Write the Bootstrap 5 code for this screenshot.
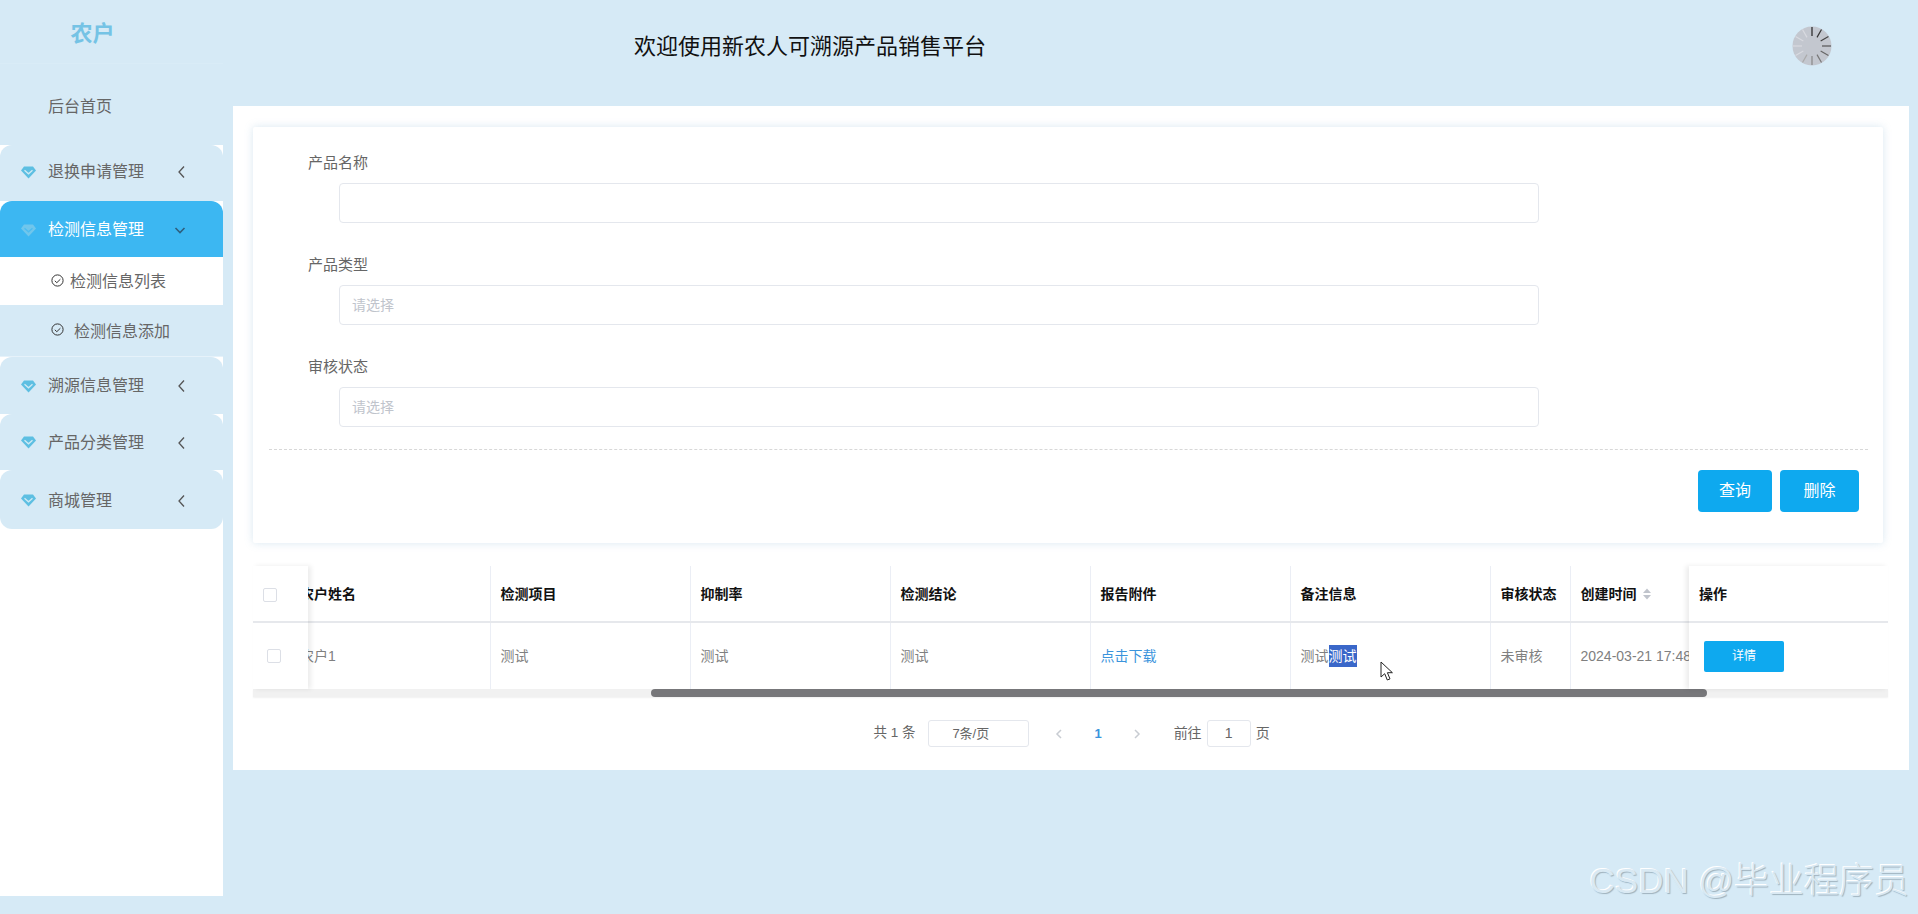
<!DOCTYPE html>
<html lang="zh-CN">
<head>
  <meta charset="UTF-8" />
  <meta name="viewport" content="width=device-width, initial-scale=1" />
  <title>新农人可溯源产品销售平台</title>
  <link href="https://cdn.jsdelivr.net/npm/bootstrap@5.3.0/dist/css/bootstrap.min.css" rel="stylesheet" />
  <style>
    html, body { height: 914px; overflow: hidden; }
    body {
      background-color: #d6eaf6;
      color: #606266;
      font-family: "Liberation Sans", "Noto Sans CJK SC", sans-serif;
      position: relative;
    }
    /* 左侧菜单 */
    .side-box { width: 223px; height: 896px; background: #fff; flex: none; }
    .side-logo {
      height: 64px; background: #d6eaf6; color: #75c3e5;
      font-size: 22px; font-weight: 700; line-height: 68px; text-align: center;
      padding-right: 38px; border-bottom: 1px solid #d9ecf7;
    }
    .side-home { height: 81px; background: #d6eaf6; padding: 31px 0 0 48px; font-size: 16px; line-height: 24px; color: #666; }
    .side-group {
      height: 56.5px; background: #d6eaf6; border-radius: 12px 12px 0 0;
      padding: 2px 37px 0 21px; font-size: 16px; color: #666;
    }
    .side-group .gem { margin-right: 12px; flex: none; }
    .side-group.first-group { height: 56px; padding-bottom: 2px; padding-top: 0; }
    .side-group.active-group { background: #3cb7f2; color: #fff; height: 56px; }
    .side-group.last-group { border-radius: 12px; height: 59px; }
    .side-sub { padding: 2px 0 0 51px; font-size: 16px; color: #666; background: #d6eaf6; }
    .side-sub.cur { background: #fff; height: 48px; }
    .side-sub.other { height: 52px; border-bottom: 1px solid #e6f2fa; }
    .sub-ic { margin-right: 6px; }
    /* 顶部 */
    .main-col { width: 1676px; flex: none; margin-left: 10px; }
    .top-bar { height: 106px; padding-bottom: 14px; }
    .top-title { margin-left: 401px; font-size: 22px; color: #111; }
    .top-spin { margin-right: 77px; }
    /* 主面板 */
    .main-panel { height: 664px; background: #fff; padding: 21px 25px 0 20px; }
    .form-box {
      height: 416px; border: 0; border-radius: 2px; width: 1630px;
      box-shadow: 0 0 8px rgba(120, 170, 205, .28);
      padding: 26px 0 0 55px;
    }
    .fld { margin-bottom: 32px; }
    .fld label { display: block; font-size: 15px; line-height: 20px; margin-bottom: 10px; color: #666; }
    .fld .form-control {
      width: 1200px; height: 40px; margin-left: 31px; font-size: 14px;
      border: 1px solid #e4e7ed; border-radius: 4px; padding: 0 12px; box-shadow: none;
    }
    .fld .form-control::placeholder { color: #c0c4cc; }
    .form-foot {
      margin: -10px 15px 0 -39px; border-top: 1px dashed #d8d8d8;
      padding: 20px 9px 0 0;
    }
    .blue-btn {
      background: #0ea9ef; border: 0; color: #fff; font-size: 16px;
      height: 42px; border-radius: 4px; padding: 0;
    }
    .blue-btn:hover { background: #0ea9ef; color: #fff; }
    .btn-a { width: 74px; }
    .btn-b { width: 79px; }
    /* 表格 */
    .tbl-wrap { width: 1635px; margin-top: 23px; }
    .tbl-row { height: 123px; }
    .pane-l { width: 55px; flex: none; box-shadow: 3px 0 5px rgba(0, 0, 0, .08); z-index: 1; background: #fff; }
    .pane-m { flex: 1; overflow: hidden; }
    .pane-r { width: 199px; flex: none; box-shadow: -3px 0 5px rgba(0, 0, 0, .08); z-index: 1; background: #fff; }
    .pane-m .data-tbl { margin-left: -18px; width: 1410px; }
    .data-tbl { table-layout: fixed; border-collapse: collapse; margin: 0; font-size: 14px; }
    .data-tbl th, .data-tbl td { padding: 0 10px; white-space: nowrap; overflow: hidden; border-right: 1px solid #ebeef5; }
    .data-tbl th { height: 56px; color: #111; font-weight: 700; border-bottom: 2px solid #e6e8ec; padding-top: 2px; }
    .data-tbl td { height: 67px; color: #808080; }
    .data-tbl th:last-child, .data-tbl td:last-child { border-right: 0; }
    .data-tbl .w200 { width: 200px; }
    .data-tbl .w80 { width: 80px; }
    .data-tbl .w130 { width: 130px; }
    .pane-l .data-tbl, .pane-r .data-tbl { width: 100%; }
    .pane-l .data-tbl th, .pane-l .data-tbl td { border-right: 0; }
    .tick-box { display: block; width: 14px; height: 14px; border: 1px solid #dcdfe6; border-radius: 2px; background: #fff; }
    .td-tick { margin-left: 4px; }
    .dl-link { color: #3b94dc; text-decoration: none; }
    .sel-txt { background: #3a67c9; color: #fff; padding: 3px 0; }
    .sort-ic { margin-left: 5px; vertical-align: -1px; }
    .mini-btn {
      width: 80px; height: 31px; font-size: 12px; background: #0ea9ef;
      border: 0; border-radius: 2px; color: #fff; padding: 0; margin-left: 5px;
    }
    .mini-btn:hover { background: #0ea9ef; color: #fff; }
    .scroll-track { height: 8px; background: #f1f1f1; position: relative; box-shadow: 0 1px 2px rgba(0, 0, 0, .06); }
    .scroll-thumb { position: absolute; left: 398px; width: 1056px; top: 0; height: 8px; border-radius: 4px; background: #77777a; }
    /* 分页 */
    .pager { margin-top: 23px; height: 27px; font-size: 14px; color: #666; padding-left: 6px; }
    .pg-total { font-size: 13.5px; }
    .pg-select { width: 101px; height: 27px; margin: 0 26px 0 13px; border: 1px solid #e4e7ed; border-radius: 3px; padding-left: 23px; line-height: 25px; font-size: 13px; }
    .pg-num { margin: 0 31px; color: #3b94dc; font-weight: 700; font-size: 13px; }
    .pg-input { width: 44px; height: 27px; margin: 0 5px; border: 1px solid #e4e7ed; border-radius: 3px; text-align: center; line-height: 25px; }
    .pg-go { margin-left: 33px; }
    /* 鼠标 水印 */
    .mouse-ptr { position: absolute; left: 1380px; top: 661px; }
    .water-mark {
      position: absolute; right: 9px; top: 860px; font-size: 35px; line-height: 42px;
      color: #d9e9f3; text-shadow: 1px 1px 1px #9fb2be, -1px -1px 0 #fff;
      font-family: "Liberation Sans", "Noto Sans CJK SC", sans-serif; font-weight: 300;
    }
  </style>
</head>
<body>

<div class="d-flex">
  <!-- 左侧菜单 -->
  <aside class="side-box">
    <div class="side-logo">农户</div>
    <div class="side-home">后台首页</div>

    <div class="side-group first-group d-flex align-items-center">
      <svg class="gem" width="15" height="13" viewBox="0 0 15 13"><path d="M3 0.5h9l3 4-7.5 8-7.5-8z" fill="#5dbfe2"/><path d="M3.5 4.2l4 3.6 4-3.6" fill="none" stroke="#cfeaf5" stroke-width="1.3"/></svg>
      <span>退换申请管理</span>
      <svg class="ms-auto" width="9" height="14" viewBox="0 0 9 14"><path d="M7 1.5L2 7l5 5.5" fill="none" stroke="#555" stroke-width="1.3"/></svg>
    </div>
    <div class="side-group active-group d-flex align-items-center">
      <svg class="gem" width="15" height="13" viewBox="0 0 15 13"><path d="M3 0.5h9l3 4-7.5 8-7.5-8z" fill="#70c6ec"/><path d="M3.5 4.2l4 3.6 4-3.6" fill="none" stroke="#4cbcf0" stroke-width="1.3"/></svg>
      <span>检测信息管理</span>
      <svg class="ms-auto" width="12" height="9" viewBox="0 0 12 9"><path d="M1.5 2L6 6.5 10.5 2" fill="none" stroke="#2f5f7e" stroke-width="1.6"/></svg>
    </div>
    <div class="side-sub cur d-flex align-items-center">
      <svg width="13" height="13" viewBox="0 0 13 13" class="sub-ic mb-1"><circle cx="6.5" cy="6.5" r="5.6" fill="none" stroke="#333" stroke-width="1"/><path d="M3.8 6.8l2 1.9 3.6-3.5" fill="none" stroke="#333" stroke-width="1"/></svg>
      <span>检测信息列表</span>
    </div>
    <div class="side-sub other d-flex align-items-center">
      <svg width="13" height="13" viewBox="0 0 13 13" class="sub-ic mb-1"><circle cx="6.5" cy="6.5" r="5.6" fill="none" stroke="#333" stroke-width="1"/><path d="M3.8 6.8l2 1.9 3.6-3.5" fill="none" stroke="#333" stroke-width="1"/></svg>
      <span class="ms-1">检测信息添加</span>
    </div>
    <div class="side-group d-flex align-items-center">
      <svg class="gem" width="15" height="13" viewBox="0 0 15 13"><path d="M3 0.5h9l3 4-7.5 8-7.5-8z" fill="#5dbfe2"/><path d="M3.5 4.2l4 3.6 4-3.6" fill="none" stroke="#cfeaf5" stroke-width="1.3"/></svg>
      <span>溯源信息管理</span>
      <svg class="ms-auto" width="9" height="14" viewBox="0 0 9 14"><path d="M7 1.5L2 7l5 5.5" fill="none" stroke="#555" stroke-width="1.3"/></svg>
    </div>
    <div class="side-group d-flex align-items-center">
      <svg class="gem" width="15" height="13" viewBox="0 0 15 13"><path d="M3 0.5h9l3 4-7.5 8-7.5-8z" fill="#5dbfe2"/><path d="M3.5 4.2l4 3.6 4-3.6" fill="none" stroke="#cfeaf5" stroke-width="1.3"/></svg>
      <span>产品分类管理</span>
      <svg class="ms-auto" width="9" height="14" viewBox="0 0 9 14"><path d="M7 1.5L2 7l5 5.5" fill="none" stroke="#555" stroke-width="1.3"/></svg>
    </div>
    <div class="side-group last-group d-flex align-items-center">
      <svg class="gem" width="15" height="13" viewBox="0 0 15 13"><path d="M3 0.5h9l3 4-7.5 8-7.5-8z" fill="#5dbfe2"/><path d="M3.5 4.2l4 3.6 4-3.6" fill="none" stroke="#cfeaf5" stroke-width="1.3"/></svg>
      <span>商城管理</span>
      <svg class="ms-auto" width="9" height="14" viewBox="0 0 9 14"><path d="M7 1.5L2 7l5 5.5" fill="none" stroke="#555" stroke-width="1.3"/></svg>
    </div>
  </aside>

  <div class="main-col">
    <!-- 顶部 -->
    <header class="top-bar d-flex align-items-center">
      <div class="top-title">欢迎使用新农人可溯源产品销售平台</div>
      <svg class="top-spin ms-auto" width="40" height="40" viewBox="0 0 40 40" id="spinIcon">
        <circle cx="20" cy="20" r="19.5" fill="#c3c7cf"/>
      </svg>
    </header>

    <!-- 主面板 -->
    <main class="main-panel">
      <form class="card form-box">
        <div class="fld">
          <label>产品名称</label>
          <input type="text" class="form-control" />
        </div>
        <div class="fld">
          <label>产品类型</label>
          <input type="text" class="form-control" placeholder="请选择" />
        </div>
        <div class="fld">
          <label>审核状态</label>
          <input type="text" class="form-control" placeholder="请选择" />
        </div>
        <div class="form-foot d-flex justify-content-end gap-2">
          <button type="button" class="btn blue-btn btn-a">查询</button>
          <button type="button" class="btn blue-btn btn-b">删除</button>
        </div>
      </form>

      <div class="tbl-wrap">
        <div class="tbl-row d-flex">
          <div class="pane-l">
            <table class="data-tbl">
              <tr><th><span class="tick-box"></span></th></tr>
              <tr><td><span class="tick-box td-tick"></span></td></tr>
            </table>
          </div>
          <div class="pane-m">
            <table class="data-tbl">
              <thead>
                <tr>
                  <th class="w200">农户姓名</th>
                  <th class="w200">检测项目</th>
                  <th class="w200">抑制率</th>
                  <th class="w200">检测结论</th>
                  <th class="w200">报告附件</th>
                  <th class="w200">备注信息</th>
                  <th class="w80">审核状态</th>
                  <th class="w130">创建时间<svg class="sort-ic" width="10" height="12" viewBox="0 0 10 12"><path d="M5 0.5l4 4.5H1z" fill="#c0c4cc"/><path d="M5 11.5l4-4.5H1z" fill="#c0c4cc"/></svg></th>
                </tr>
              </thead>
              <tbody>
                <tr>
                  <td>农户1</td>
                  <td>测试</td>
                  <td>测试</td>
                  <td>测试</td>
                  <td><a class="dl-link" href="#">点击下载</a></td>
                  <td>测试<span class="sel-txt">测试</span></td>
                  <td>未审核</td>
                  <td>2024-03-21 17:48:00</td>
                </tr>
              </tbody>
            </table>
          </div>
          <div class="pane-r">
            <table class="data-tbl">
              <tr><th>操作</th></tr>
              <tr><td><button type="button" class="btn mini-btn">详情</button></td></tr>
            </table>
          </div>
        </div>
        <div class="scroll-track"><div class="scroll-thumb"></div></div>
      </div>

      <!-- 分页 -->
      <div class="pager d-flex align-items-center justify-content-center">
        <span class="pg-total">共 1 条</span>
        <span class="pg-select">7条/页</span>
        <svg width="8" height="12" viewBox="0 0 8 12"><path d="M6 2L2 6l4 4" fill="none" stroke="#c8ccd2" stroke-width="1.5"/></svg>
        <span class="pg-num">1</span>
        <svg width="8" height="12" viewBox="0 0 8 12"><path d="M2 2l4 4-4 4" fill="none" stroke="#c8ccd2" stroke-width="1.5"/></svg>
        <span class="pg-go">前往</span>
        <span class="pg-input">1</span>
        <span>页</span>
      </div>
    </main>
  </div>
</div>

<svg class="mouse-ptr" width="15" height="21" viewBox="0 0 15 21"><path d="M1 1v15l3.7-3.3 2.6 6.3 2.7-1.1-2.6-6.2h5z" fill="#fff" stroke="#222" stroke-width="1"/></svg>
<div class="water-mark">CSDN @毕业程序员</div>

<script>
  // 加载图标的刻度线
  const spin = document.getElementById("spinIcon");
  const shades = ["#222", "#333", "#444", "#555", "#666", "#777", "#888", "#aaa", "#d8dae0", "#d8dae0", "#d8dae0", "#d8dae0"];
  shades.forEach((c, i) => {
    const line = document.createElementNS("http://www.w3.org/2000/svg", "line");
    line.setAttribute("x1", 20);
    line.setAttribute("y1", 1);
    line.setAttribute("x2", 20);
    line.setAttribute("y2", 10);
    line.setAttribute("stroke", c);
    line.setAttribute("stroke-width", 1.2);
    line.setAttribute("transform", `rotate(${i * 30} 20 20)`);
    spin.appendChild(line);
  });
</script>

</body>
</html>
